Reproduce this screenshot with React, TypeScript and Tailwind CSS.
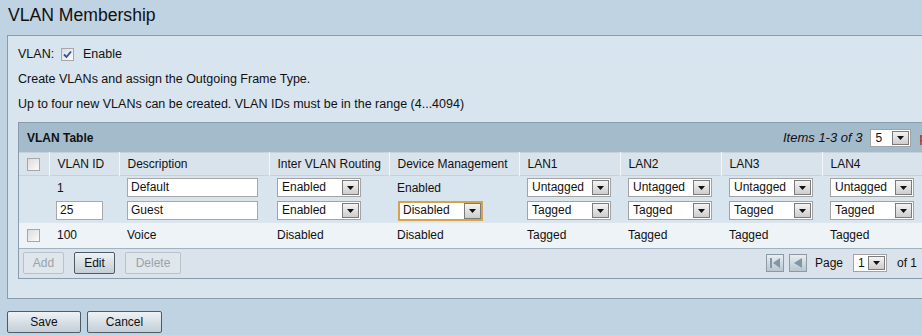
import React from 'react';
import clsx from 'clsx';

const font = "font-['Liberation_Sans',Arial,sans-serif]";

function Caret() {
  return (
    <svg width="7" height="4" viewBox="0 0 7 4">
      <path d="M0 0h7L3.5 4z" fill="#111" />
    </svg>
  );
}

function Select({
  value,
  className,
  focus,
}: {
  value: string;
  className: string;
  focus?: boolean;
}) {
  return (
    <div
      className={clsx(
        'flex bg-white',
        focus ? 'border-2 border-[#d3a34e] p-0' : 'border border-[#a3a3a3] p-[1px]',
        className
      )}
    >
      <span className="flex-1 pl-[3px] leading-[15px] text-[12px] whitespace-nowrap overflow-hidden">
        {value}
      </span>
      <span className="w-[17px] flex items-center justify-center border border-[#7b7b7b] bg-gradient-to-b from-[#f4f4f4] to-[#cdcdcd]">
        <Caret />
      </span>
    </div>
  );
}

function TextInput({ value, className }: { value: string; className: string }) {
  return (
    <div
      className={clsx(
        'h-[19px] border border-[#a8a8a8] bg-white pl-[3px] leading-[17px] text-[12px]',
        className
      )}
    >
      {value}
    </div>
  );
}

function Box({ checked }: { checked?: boolean }) {
  return (
    <span className="inline-flex w-[13px] h-[13px] border border-[#a7a7a7] bg-gradient-to-br from-[#dcdcdc] to-[#fbfbfb] items-center justify-center">
      {checked && (
        <svg width="9" height="9" viewBox="0 0 9 9">
          <path d="M1 4.5l2.5 2.5L8 1.5" stroke="#2c4fa8" strokeWidth="1.8" fill="none" />
        </svg>
      )}
    </span>
  );
}

function Button({
  label,
  className,
  disabled,
}: {
  label: string;
  className: string;
  disabled?: boolean;
}) {
  return (
    <div
      className={clsx(
        'h-[22px] flex items-center justify-center rounded-[2px] border text-[12px]',
        disabled
          ? 'border-[#b7c2cb] text-[#9aa3aa] bg-[#dfe6ec]'
          : 'border-[#4f5a63] text-[#111] bg-gradient-to-b from-[#eef2f5] to-[#c3ced7]',
        className
      )}
    >
      {label}
    </div>
  );
}

function NavIcon({ first }: { first?: boolean }) {
  return (
    <span className="w-[18px] h-[18px] border border-[#8d9aa4] bg-gradient-to-b from-[#e8edf1] to-[#b9c6d0] flex items-center justify-center">
      <svg width="12" height="10" viewBox="0 0 12 10">
        {first && <rect x="1" y="0" width="2" height="10" fill="#8097a7" />}
        <path d={first ? 'M4 5L11 0v10z' : 'M2 5L10 0v10z'} fill="#8097a7" />
      </svg>
    </span>
  );
}

const cols = ['w-[30px]', 'w-[70px]', 'w-[150px]', 'w-[120px]', 'w-[130px]', 'w-[101px]', 'w-[101px]', 'w-[101px]', 'w-[101px]', 'w-[101px]'];
const heads = ['', 'VLAN ID', 'Description', 'Inter VLAN Routing', 'Device Management', 'LAN1', 'LAN2', 'LAN3', 'LAN4', 'DMZ'];

export default function App() {
  return (
    <div className={clsx(font, 'w-[922px] h-[335px] overflow-hidden bg-[#c0d3e3] text-[12px] text-[#111]')}>
      <h1 className="h-[35px] pl-[8px] pt-[3px] text-[17.6px] leading-[24px]">VLAN Membership</h1>

      <div className="ml-[7px] h-[264px] border-t border-l border-b border-[#8a9bab] bg-[#d8e4ee] pl-[10px] pt-[6px]">
        <div className="h-[25px] flex items-center text-[12.5px]">
          <span className="w-[43px]">VLAN:</span>
          <span className="flex"><Box checked /></span>
          <span className="ml-[9px]">Enable</span>
        </div>
        <div className="h-[25px] flex items-center text-[12.5px]">Create VLANs and assign the Outgoing Frame Type.</div>
        <div className="h-[25px] flex items-center text-[12.5px]">Up to four new VLANs can be created. VLAN IDs must be in the range (4...4094)</div>

        <div className="mt-[5px] w-[1010px] border-t border-l border-b border-[#8a9bab]">
          <div className="h-[29px] flex items-center bg-[#a4bbcc]">
            <span className="w-[764px] pl-[8px] font-bold text-[12px]">VLAN Table</span>
            <span className="italic text-[13px]">Items 1-3 of 3</span>
            <Select value="5" className="ml-[8px] w-[41px] h-[18px]" />
            <span className="ml-[8px] text-[13px] text-[#b0142a]">per page</span>
          </div>

          <table className="table-fixed border-collapse">
            <colgroup>
              {cols.map((c, i) => (
                <col key={i} className={c} />
              ))}
            </colgroup>
            <thead>
              <tr className="h-[23px] bg-[#d9e3ec] border-t border-[#c5d2dc] border-b border-[#a3b3c0]">
                {heads.map((h, i) => (
                  <th
                    key={i}
                    className={clsx(
                      'p-0 text-left font-normal text-[12px]',
                      i === 0 ? 'pl-[8px]' : 'pl-[8px] border-l border-[#f3f6f9]'
                    )}
                  >
                    {i === 0 ? <span className="flex"><Box /></span> : h}
                  </th>
                ))}
              </tr>
            </thead>
            <tbody>
              <tr className="h-[24px] bg-[#d8e4ee]">
                <td />
                <td className="pl-[8px]">1</td>
                <td className="pl-[8px]"><TextInput value="Default" className="w-[131px]" /></td>
                <td className="pl-[8px]"><Select value="Enabled" className="w-[84px] h-[19px]" /></td>
                <td className="pl-[8px]">Enabled</td>
                {[0, 1, 2, 3, 4].map((i) => (
                  <td key={i} className="pl-[8px]"><Select value="Untagged" className="w-[84px] h-[19px]" /></td>
                ))}
              </tr>
              <tr className="h-[23px] bg-[#d8e4ee]">
                <td />
                <td className="pl-[7px]"><TextInput value="25" className="w-[47px]" /></td>
                <td className="pl-[8px]"><TextInput value="Guest" className="w-[131px]" /></td>
                <td className="pl-[8px]"><Select value="Enabled" className="w-[84px] h-[19px]" /></td>
                <td className="pl-[9px]"><Select value="Disabled" focus className="w-[85px] h-[20px]" /></td>
                {[0, 1, 2, 3, 4].map((i) => (
                  <td key={i} className="pl-[8px]"><Select value="Tagged" className="w-[84px] h-[19px]" /></td>
                ))}
              </tr>
              <tr className="h-[25px] bg-[#eef3f8] border-t border-[#dde6ee]">
                <td className="pl-[8px]"><span className="flex"><Box /></span></td>
                <td className="pl-[8px]">100</td>
                <td className="pl-[8px]">Voice</td>
                <td className="pl-[8px]">Disabled</td>
                <td className="pl-[8px]">Disabled</td>
                {[0, 1, 2, 3, 4].map((i) => (
                  <td key={i} className="pl-[8px]">Tagged</td>
                ))}
              </tr>
            </tbody>
          </table>

          <div className="h-[30px] flex items-center border-t border-[#a0b1bf] bg-[#dae3eb] pl-[4px]">
            <Button label="Add" disabled className="w-[41px]" />
            <Button label="Edit" className="ml-[10px] w-[41px]" />
            <Button label="Delete" disabled className="ml-[10px] w-[56px]" />
            <span className="ml-[585px] flex"><NavIcon first /></span>
            <span className="ml-[5px] flex"><NavIcon /></span>
            <span className="ml-[8px] text-[12px]">Page</span>
            <Select value="1" className="ml-[10px] w-[34px] h-[18px]" />
            <span className="ml-[10px] text-[12px]">of 1</span>
          </div>
        </div>
      </div>

      <div className="flex pl-[7px] pt-[12px]">
        <Button label="Save" className="w-[74px]" />
        <Button label="Cancel" className="ml-[6px] w-[75px]" />
      </div>
    </div>
  );
}
